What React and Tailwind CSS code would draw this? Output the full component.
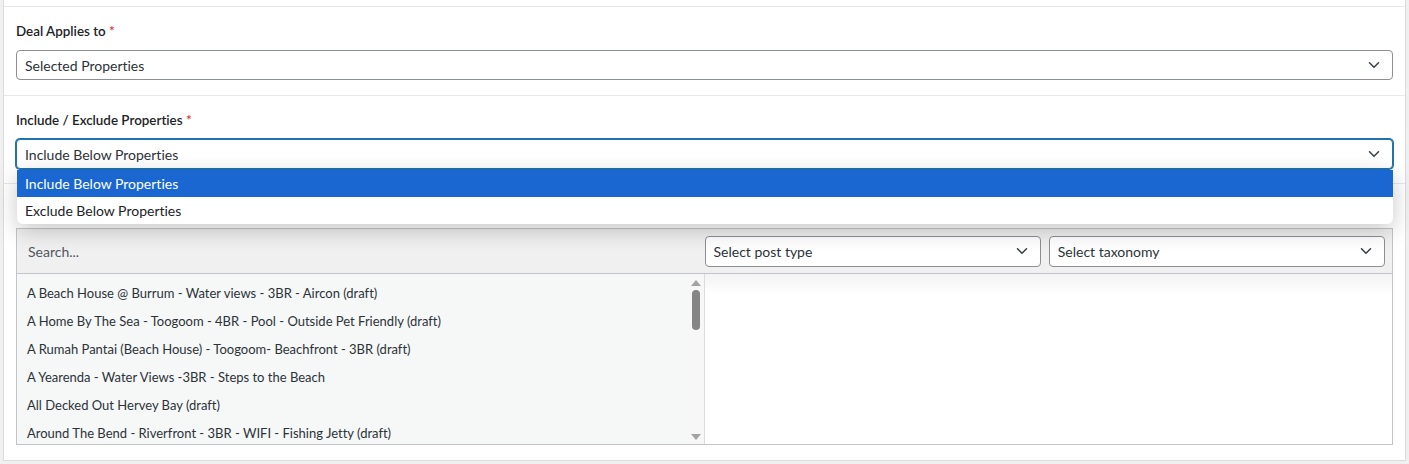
const items = [
  'A Beach House @ Burrum - Water views - 3BR - Aircon (draft)',
  'A Home By The Sea - Toogoom - 4BR - Pool - Outside Pet Friendly (draft)',
  'A Rumah Pantai (Beach House) - Toogoom- Beachfront - 3BR (draft)',
  'A Yearenda - Water Views -3BR - Steps to the Beach',
  'All Decked Out Hervey Bay (draft)',
  'Around The Bend - Riverfront - 3BR - WIFI - Fishing Jetty (draft)',
];

function Chevron({ className = '' }) {
  return (
    <svg width="12" height="8" viewBox="0 0 12 8" className={className}>
      <path d="M1.5 1.8 6 6.2l4.5-4.4" fill="none" stroke="#3c434a" strokeWidth="1.6" strokeLinecap="round" strokeLinejoin="round" />
    </svg>
  );
}

function Select({ value, focused = false, className = '' }) {
  return (
    <div
      className={`flex items-center justify-between h-[30px] pl-[8px] pr-[12px] rounded-[4px] bg-white text-[14px] text-[#2c3338] ${
        focused ? 'border border-[#2271b1] shadow-[0_0_0_1px_#2271b1]' : 'border border-[#8c8f94]'
      } ${className}`}
    >
      <span>{value}</span>
      <Chevron />
    </div>
  );
}

function Label({ children, hidden = false }) {
  return (
    <div className={`h-[20px] leading-[20px] text-[13.4px] font-semibold text-[#1d2327] mb-[9px] ${hidden ? 'invisible' : ''}`}>
      {children} <span className="text-[#d63638]">*</span>
    </div>
  );
}

export default function App() {
  return (
    <div className="w-[1409px] h-[464px] bg-[#f0f0f1] pl-[3px] pr-[3px] pb-[3px] overflow-hidden font-['Lato',sans-serif] [font-variant-ligatures:none]">
      <div className="h-full bg-white border-x border-b border-[#dcdcde] flex flex-col">
        <div className="h-[6px]" />

        <div className="border-t border-[#e8e8e8] px-[12px] pt-[14px] pb-[15px]">
          <Label>Deal Applies to</Label>
          <Select value="Selected Properties" />
        </div>

        <div className="border-t border-[#e8e8e8] px-[12px] pt-[14px] pb-[14px] relative z-10">
          <Label>Include / Exclude Properties</Label>
          <Select value="Include Below Properties" focused />
          <div className="absolute left-[13px] right-[12px] top-[74px] bg-white rounded-b-[6px] overflow-hidden text-[14px] shadow-[0_6px_22px_rgba(0,0,0,0.22)]">
            <div className="h-[27px] flex items-center px-[8px] bg-[#1a67d2] text-white">Include Below Properties</div>
            <div className="h-[27px] flex items-center px-[8px] text-[#1d2327]">Exclude Below Properties</div>
          </div>
        </div>

        <div className="border-t border-[#e8e8e8] px-[12px] pt-[15px] flex-1 min-h-0">
          <Label hidden>Properties</Label>
          <div className="border border-[#c3c4c7] h-[217px] flex flex-col">
            <div className="h-[45px] shrink-0 grid grid-cols-2 bg-[#f0f0f0] border-b border-[#c3c4c7]">
              <div className="flex items-center pl-[11px] text-[14px] text-[#50575e]">Search...</div>
              <div className="flex items-center gap-[8px] pr-[7px]">
                <Select value="Select post type" className="flex-1 h-[31px] bg-transparent" />
                <Select value="Select taxonomy" className="flex-1 h-[31px] bg-transparent" />
              </div>
            </div>
            <div className="flex-1 min-h-0 grid grid-cols-2">
              <div className="relative bg-[#f6f7f7] border-r border-[#dcdcde] overflow-hidden">
                <div className="pt-[6px] pr-[20px]">
                  {items.map((item) => (
                    <div key={item} className="h-[28px] flex items-center pl-[10px] text-[13px] text-[#2c3338] whitespace-nowrap">
                      {item}
                    </div>
                  ))}
                </div>
                <div className="absolute right-0 top-0 bottom-0 w-[16px] bg-[#f7f7f7] flex flex-col items-center">
                  <svg width="10" height="6" viewBox="0 0 10 6" className="mt-[6px]">
                    <path d="M5 0 10 6H0z" fill="#a3a3a3" />
                  </svg>
                  <div className="w-[8px] h-[40px] mt-[4px] rounded-full bg-[#858585]" />
                  <div className="flex-1" />
                  <svg width="10" height="6" viewBox="0 0 10 6" className="mb-[4px]">
                    <path d="M0 0h10L5 6z" fill="#a3a3a3" />
                  </svg>
                </div>
              </div>
              <div className="bg-gradient-to-b from-[#f3f3f3] to-white to-[12%]" />
            </div>
          </div>
        </div>
      </div>
    </div>
  );
}
